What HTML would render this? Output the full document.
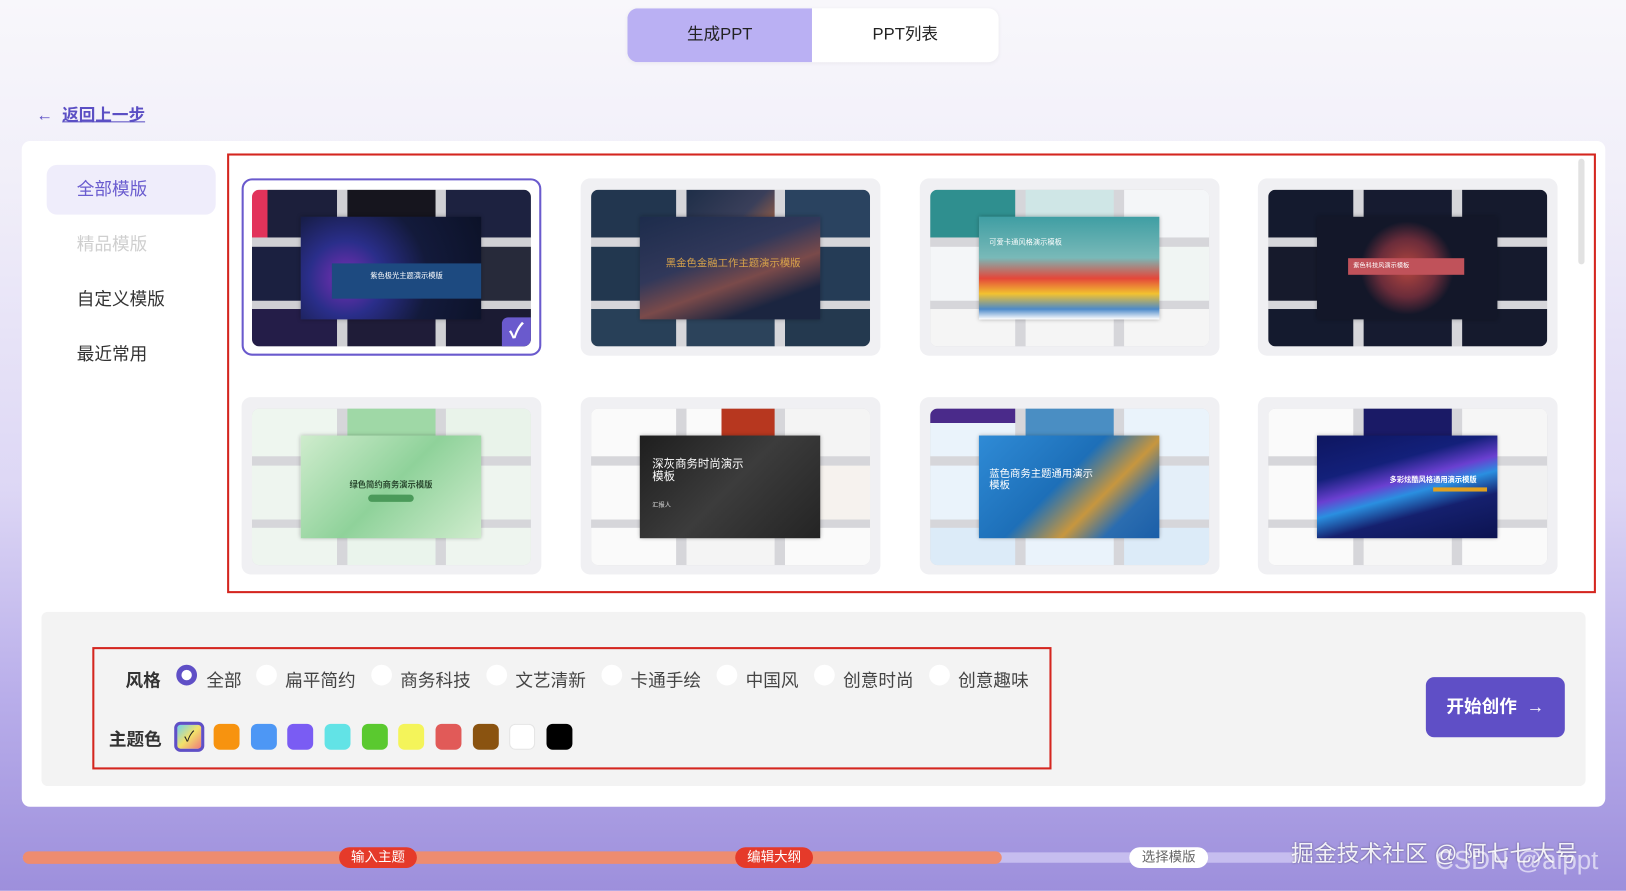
<!DOCTYPE html>
<html><head><meta charset="utf-8"><style>
*{margin:0;padding:0;box-sizing:border-box}
html,body{width:1626px;height:891px;overflow:hidden}
body{font-family:"Liberation Sans","Noto Sans CJK SC",sans-serif;}
#w{width:1568px;height:859px;transform:scale(1.03699);transform-origin:0 0;position:relative;
background:linear-gradient(180deg,#f8f7fb 0%,#f1eff9 20%,#ddd7f5 55%,#b9aeea 78%,#9d8fdc 100%);}
.abs{position:absolute}
.tabs{left:605px;top:8px;width:358px;height:52px;background:#fff;border-radius:10px;overflow:hidden;box-shadow:0 1px 4px rgba(0,0,0,.05)}
.tabs div{position:absolute;top:0;height:52px;line-height:52px;text-align:center;font-size:16px;color:#222}
.back{left:35px;top:97px;font-size:16px;color:#5b4fc4;font-weight:bold}
.back span{text-decoration:underline}
.panel{left:21px;top:136px;width:1527px;height:642px;background:#fff;border-radius:8px}
.menu{left:45px;width:163px;height:48px;line-height:48px;padding-left:29px;font-size:17px;color:#333;border-radius:10px}
.red{border:2px solid #d4261f}
.card{position:absolute;width:289px;height:171px;background:#f0f0f3;border-radius:9px}
.th{position:absolute;left:10px;top:11px;width:269px;height:151px;border-radius:7px;overflow:hidden;background:#d6d6da}
.t{position:absolute}
.c{position:absolute;left:47px;top:26px;width:174px;height:99px;box-shadow:0 0 4px rgba(0,0,0,.3)}
.bottom{left:40px;top:590px;width:1489px;height:168px;background:#f3f3f3;border-radius:6px}
.lab{font-size:17px;font-weight:bold;color:#333}
.opt{font-size:17px;color:#444;position:absolute;top:642px}
.rad{position:absolute;top:641px;width:20px;height:20px;border-radius:50%;background:#fff}
.sw{position:absolute;top:698px;width:25px;height:25px;border-radius:6px}
.btn{left:1375px;top:653px;width:134px;height:58px;background:#5f4fc6;border-radius:8px;color:#fff;font-weight:bold;font-size:17px;line-height:58px;text-align:center}
.pill{position:absolute;top:817px;height:20px;line-height:20px;border-radius:10px;font-size:13px;text-align:center;width:75px}
</style></head><body><div id="w">

<div class="abs tabs"><div style="left:0;width:178px;background:#bab0f3">生成PPT</div><div style="left:178px;width:180px">PPT列表</div></div>
<div class="abs back">←&nbsp; <span>返回上一步</span></div>

<div class="abs panel"></div>
<div class="abs menu" style="top:159px;background:#efedfb;color:#6a5ccf">全部模版</div>
<div class="abs menu" style="top:212px;color:#cfcfcf">精品模版</div>
<div class="abs menu" style="top:265px">自定义模版</div>
<div class="abs menu" style="top:318px">最近常用</div>

<div class="abs red" style="left:219px;top:148px;width:1320px;height:424px"></div>
<div class="abs" style="left:1522px;top:153px;width:6px;height:102px;background:#e2e2e2;border-radius:3px"></div>

<!-- row 1 -->
<div class="card" style="left:233px;top:172px;background:#fff;border:2px solid #6a5acd;border-radius:10px">
 <div class="th" style="left:8px;top:9px;background:#d0d0d4">
  <div class="t" style="left:0;top:0;width:82px;height:46px;background:linear-gradient(90deg,#e2335a 0 18%,#1c1f3b 18%)"></div>
  <div class="t" style="left:92px;top:0;width:85px;height:46px;background:#16151e"></div>
  <div class="t" style="left:187px;top:0;width:82px;height:46px;background:#1d2240"></div>
  <div class="t" style="left:0;top:55px;width:82px;height:52px;background:#1b2040"></div>
  <div class="t" style="left:187px;top:55px;width:82px;height:52px;background:#272a3a"></div>
  <div class="t" style="left:0;top:115px;width:82px;height:36px;background:#241d48"></div>
  <div class="t" style="left:92px;top:115px;width:85px;height:36px;background:#1f1c38"></div>
  <div class="t" style="left:187px;top:115px;width:82px;height:36px;background:#1b1b33"></div>
  <div class="c" style="background:radial-gradient(circle at 25% 60%,#7b2fb4 0,#2a2e8a 25%,#131a3b 55%,#0c1228 100%)">
   <div class="t" style="left:30px;top:45px;width:144px;height:34px;background:#1d4a80;color:#fff;font-size:7px;text-align:center;line-height:26px">紫色极光主题演示模版</div>
  </div>
  <div class="t" style="left:241px;top:123px;width:28px;height:28px;background:#6a5acd;border-radius:6px 0 7px 0;color:#fff;font-size:20px;text-align:center;line-height:28px;font-weight:bold">✓</div>
 </div>
</div>
<div class="card" style="left:560px;top:172px">
 <div class="th">
  <div class="t" style="left:0;top:0;width:82px;height:46px;background:#22364f"></div>
  <div class="t" style="left:92px;top:0;width:85px;height:46px;background:linear-gradient(135deg,#1e2e48,#3a3f5a 60%,#b5683e)"></div>
  <div class="t" style="left:187px;top:0;width:82px;height:46px;background:#2a4360"></div>
  <div class="t" style="left:0;top:55px;width:82px;height:52px;background:#22374f"></div>
  <div class="t" style="left:187px;top:55px;width:82px;height:52px;background:#253c56"></div>
  <div class="t" style="left:0;top:115px;width:82px;height:36px;background:#284058"></div>
  <div class="t" style="left:92px;top:115px;width:85px;height:36px;background:#2c435b"></div>
  <div class="t" style="left:187px;top:115px;width:82px;height:36px;background:#24394f"></div>
  <div class="c" style="background:linear-gradient(160deg,#1d2c4c 0,#31385a 40%,#7a4a4a 60%,#1b2540 80%)">
   <div class="t" style="left:25px;top:40px;width:145px;color:#d7a24a;font-size:10px;line-height:11px">黑金色金融工作主题演示模版</div>
  </div>
 </div>
</div>
<div class="card" style="left:887px;top:172px">
 <div class="th">
  <div class="t" style="left:0;top:0;width:82px;height:46px;background:#2f8f8f"></div>
  <div class="t" style="left:92px;top:0;width:85px;height:46px;background:#cfe6e6"></div>
  <div class="t" style="left:187px;top:0;width:82px;height:46px;background:#f4f6f8"></div>
  <div class="t" style="left:0;top:55px;width:82px;height:52px;background:#f4f6f8"></div>
  <div class="t" style="left:187px;top:55px;width:82px;height:52px;background:#f0f5f3"></div>
  <div class="t" style="left:0;top:115px;width:82px;height:36px;background:#f5f5f5"></div>
  <div class="t" style="left:92px;top:115px;width:85px;height:36px;background:#f5f5f5"></div>
  <div class="t" style="left:187px;top:115px;width:82px;height:36px;background:#f5f5f5"></div>
  <div class="c" style="background:linear-gradient(180deg,#3f9ea3 0,#79b9b8 40%,#e4473a 60%,#f2c230 75%,#4d8ac9 90%,#ffffff 100%)">
   <div class="t" style="left:10px;top:20px;color:#fff;font-size:7px">可爱卡通风格演示模板</div>
  </div>
 </div>
</div>
<div class="card" style="left:1213px;top:172px">
 <div class="th">
  <div class="t" style="left:0;top:0;width:82px;height:46px;background:#141a2e"></div>
  <div class="t" style="left:92px;top:0;width:85px;height:46px;background:#161b30"></div>
  <div class="t" style="left:187px;top:0;width:82px;height:46px;background:#151a2d"></div>
  <div class="t" style="left:0;top:55px;width:82px;height:52px;background:#161a2c"></div>
  <div class="t" style="left:187px;top:55px;width:82px;height:52px;background:#151a2d"></div>
  <div class="t" style="left:0;top:115px;width:82px;height:36px;background:#141a2e"></div>
  <div class="t" style="left:92px;top:115px;width:85px;height:36px;background:#161b30"></div>
  <div class="t" style="left:187px;top:115px;width:82px;height:36px;background:#151a2d"></div>
  <div class="c" style="background:radial-gradient(circle at 50% 50%,#b4463f 0,#6a2c3a 28%,#131729 45%)">
   <div class="t" style="left:30px;top:40px;width:112px;height:16px;background:#c0525a;color:#fff;font-size:6px;line-height:16px;padding-left:5px">紫色科技风演示模板</div>
  </div>
 </div>
</div>

<!-- row 2 -->
<div class="card" style="left:233px;top:383px">
 <div class="th">
  <div class="t" style="left:0;top:0;width:82px;height:46px;background:#eef6ef"></div>
  <div class="t" style="left:92px;top:0;width:85px;height:46px;background:#9fd8a6"></div>
  <div class="t" style="left:187px;top:0;width:82px;height:46px;background:#e9f3ea"></div>
  <div class="t" style="left:0;top:55px;width:82px;height:52px;background:#eef5ef"></div>
  <div class="t" style="left:187px;top:55px;width:82px;height:52px;background:#eef5ef"></div>
  <div class="t" style="left:0;top:115px;width:82px;height:36px;background:#eef5ef"></div>
  <div class="t" style="left:92px;top:115px;width:85px;height:36px;background:#eaf4ec"></div>
  <div class="t" style="left:187px;top:115px;width:82px;height:36px;background:#eef5ef"></div>
  <div class="c" style="background:linear-gradient(135deg,#cfeccd,#8fd29a 50%,#cfeccd)">
   <div class="t" style="left:0;top:42px;width:174px;text-align:center;color:#2b4a30;font-size:8px;font-weight:bold">绿色简约商务演示模版</div>
   <div class="t" style="left:65px;top:57px;width:44px;height:7px;border-radius:4px;background:#4b9a5a"></div>
  </div>
 </div>
</div>
<div class="card" style="left:560px;top:383px">
 <div class="th">
  <div class="t" style="left:0;top:0;width:82px;height:46px;background:#fafafa"></div>
  <div class="t" style="left:92px;top:0;width:85px;height:46px;background:linear-gradient(90deg,#fafafa 40%,#b7371f 40%)"></div>
  <div class="t" style="left:187px;top:0;width:82px;height:46px;background:#f4f4f4"></div>
  <div class="t" style="left:0;top:55px;width:82px;height:52px;background:#fafafa"></div>
  <div class="t" style="left:187px;top:55px;width:82px;height:52px;background:#f6f2ee"></div>
  <div class="t" style="left:0;top:115px;width:82px;height:36px;background:#fafafa"></div>
  <div class="t" style="left:92px;top:115px;width:85px;height:36px;background:#f4f4f4"></div>
  <div class="t" style="left:187px;top:115px;width:82px;height:36px;background:#fafafa"></div>
  <div class="c" style="background:linear-gradient(135deg,#1e1e1e,#3c3c3c 50%,#242424)">
   <div class="t" style="left:12px;top:22px;width:95px;color:#fff;font-size:11px;line-height:12px">深灰商务时尚演示模板</div>
   <div class="t" style="left:12px;top:62px;color:#ddd;font-size:6px">汇报人</div>
  </div>
 </div>
</div>
<div class="card" style="left:887px;top:383px">
 <div class="th">
  <div class="t" style="left:0;top:0;width:82px;height:46px;background:linear-gradient(180deg,#4a2a8a 0 30%,#eaf3fb 30%)"></div>
  <div class="t" style="left:92px;top:0;width:85px;height:46px;background:#4a8ec3"></div>
  <div class="t" style="left:187px;top:0;width:82px;height:46px;background:#eaf3fb"></div>
  <div class="t" style="left:0;top:55px;width:82px;height:52px;background:#eaf3fb"></div>
  <div class="t" style="left:187px;top:55px;width:82px;height:52px;background:#e4eff9"></div>
  <div class="t" style="left:0;top:115px;width:82px;height:36px;background:#dcebf8"></div>
  <div class="t" style="left:92px;top:115px;width:85px;height:36px;background:#eaf3fb"></div>
  <div class="t" style="left:187px;top:115px;width:82px;height:36px;background:#dcebf8"></div>
  <div class="c" style="background:linear-gradient(135deg,#2f8bd6,#1d6fb8 45%,#c7963e 65%,#2b6db0 80%,#1a5ea8)">
   <div class="t" style="left:10px;top:32px;width:105px;color:#fff;font-size:10px;line-height:11px">蓝色商务主题通用演示模板</div>
  </div>
 </div>
</div>
<div class="card" style="left:1213px;top:383px">
 <div class="th">
  <div class="t" style="left:0;top:0;width:82px;height:46px;background:#fafafa"></div>
  <div class="t" style="left:92px;top:0;width:85px;height:46px;background:#1a1a66"></div>
  <div class="t" style="left:187px;top:0;width:82px;height:46px;background:#f6f6f6"></div>
  <div class="t" style="left:0;top:55px;width:82px;height:52px;background:#fafafa"></div>
  <div class="t" style="left:187px;top:55px;width:82px;height:52px;background:#f2f2f2"></div>
  <div class="t" style="left:0;top:115px;width:82px;height:36px;background:#fafafa"></div>
  <div class="t" style="left:92px;top:115px;width:85px;height:36px;background:#f6f6f6"></div>
  <div class="t" style="left:187px;top:115px;width:82px;height:36px;background:#fafafa"></div>
  <div class="c" style="background:linear-gradient(165deg,#0e1660 0,#13207a 30%,#6a3fd0 45%,#2a8fe0 55%,#15206e 70%,#0c1350)">
   <div class="t" style="left:70px;top:38px;color:#fff;font-size:7px;font-weight:bold">多彩炫酷风格通用演示模版</div>
   <div class="t" style="left:112px;top:50px;width:52px;height:4px;background:#e0a020"></div>
  </div>
 </div>
</div>

<div class="abs bottom"></div>
<div class="abs red" style="left:89px;top:624px;width:925px;height:118px"></div>
<div class="abs lab" style="left:121px;top:642px">风格</div>
<div class="rad" style="left:170px;border:5px solid #5f4fc6"></div><span class="opt" style="left:199px">全部</span>
<div class="rad" style="left:247px"></div><span class="opt" style="left:275px">扁平简约</span>
<div class="rad" style="left:358px"></div><span class="opt" style="left:386px">商务科技</span>
<div class="rad" style="left:469px"></div><span class="opt" style="left:497px">文艺清新</span>
<div class="rad" style="left:580px"></div><span class="opt" style="left:608px">卡通手绘</span>
<div class="rad" style="left:691px"></div><span class="opt" style="left:719px">中国风</span>
<div class="rad" style="left:785px"></div><span class="opt" style="left:813px">创意时尚</span>
<div class="rad" style="left:896px"></div><span class="opt" style="left:924px">创意趣味</span>

<div class="abs lab" style="left:105px;top:699px">主题色</div>
<div class="sw" style="left:168px;width:29px;height:29px;top:696px;border:3px solid #5f4fc6;background:linear-gradient(135deg,#6fd1f0,#f3e26a 50%,#f07a7a);font-size:14px;text-align:center;line-height:22px;color:#222">✓</div>
<div class="sw" style="left:206px;background:#f7930f"></div>
<div class="sw" style="left:242px;background:#4d97f5"></div>
<div class="sw" style="left:277px;background:#7a5cf3"></div>
<div class="sw" style="left:313px;background:#62e3e6"></div>
<div class="sw" style="left:349px;background:#5ac92f"></div>
<div class="sw" style="left:384px;background:#f4f45a"></div>
<div class="sw" style="left:420px;background:#e15a58"></div>
<div class="sw" style="left:456px;background:#8a5310"></div>
<div class="sw" style="left:491px;background:#fff;border:1px solid #e5e5e5"></div>
<div class="sw" style="left:527px;background:#000"></div>

<div class="abs btn">开始创作 &nbsp;→</div>

<div class="abs" style="left:22px;top:822px;width:1230px;height:10px;border-radius:5px;background:#c6bdef"></div>
<div class="abs" style="left:22px;top:821px;width:944px;height:12px;border-radius:6px;background:#ee8c70"></div>
<div class="pill" style="left:327px;background:#e53a2a;color:#fff">输入主题</div>
<div class="pill" style="left:709px;background:#e53a2a;color:#fff">编辑大纲</div>
<div class="pill" style="left:1089px;background:#fff;color:#666;width:76px">选择模版</div>
<div class="abs" style="left:1245px;top:806px;font-size:22px;color:rgba(255,255,255,.9);text-shadow:0 0 2px rgba(0,0,0,.4)">掘金技术社区 @ 阿七七大号</div>
<div class="abs" style="left:1384px;top:816px;font-size:25px;color:rgba(255,255,255,.6)">CSDN @aippt</div>
</div></body></html>
